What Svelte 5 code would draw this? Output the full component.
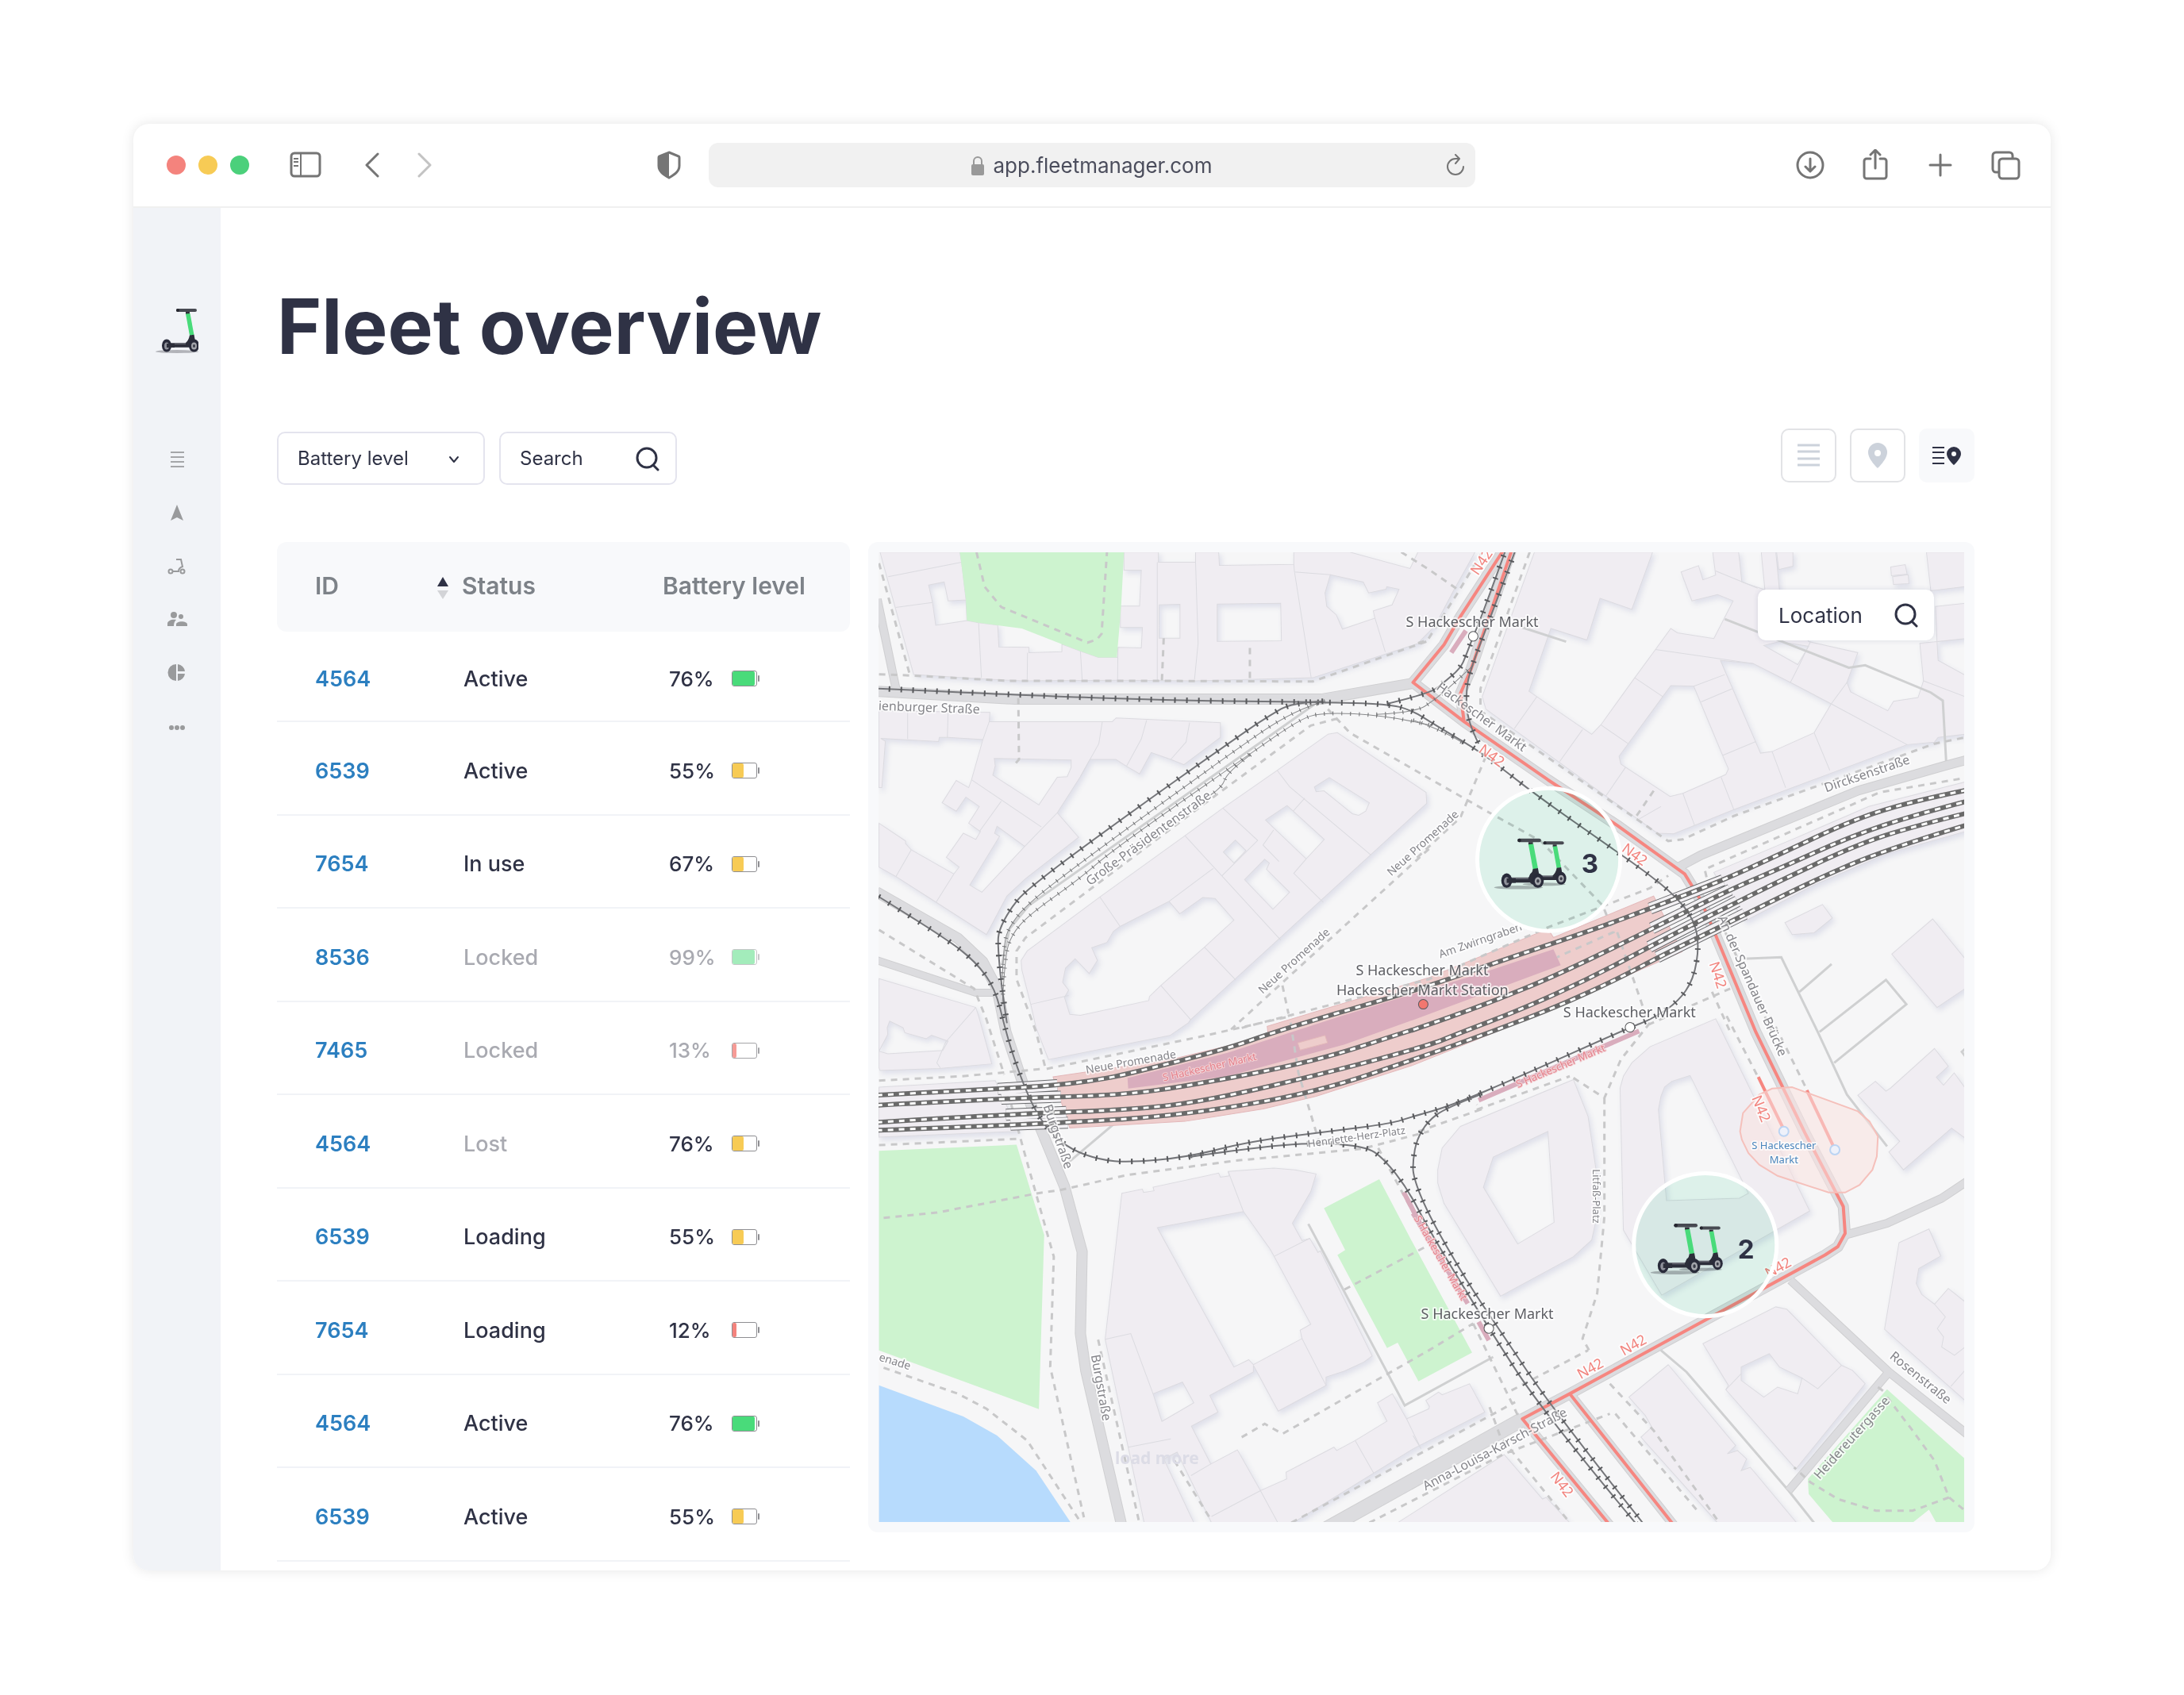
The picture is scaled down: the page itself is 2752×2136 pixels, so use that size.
<script>
  const vehicles = [
    { id: 4564, status: 'Active', battery: 76 },
    { id: 6539, status: 'Active', battery: 55 },
    { id: 7654, status: 'In use', battery: 67 },
    { id: 8536, status: 'Locked', battery: 99, locked: true },
    { id: 7465, status: 'Locked', battery: 13, locked: true },
    { id: 4564, status: 'Lost', battery: 76, level: 'mid', lost: true },
    { id: 6539, status: 'Loading', battery: 55 },
    { id: 7654, status: 'Loading', battery: 12 },
    { id: 4564, status: 'Active', battery: 76 },
    { id: 6539, status: 'Active', battery: 55 }
  ];

  const fills = { high: 92, mid: 48, low: 18 };
  const levelOf = (v) => v.level ?? (v.battery > 70 ? 'high' : v.battery > 20 ? 'mid' : 'low');

  // The map data comes in four survey tiles, each with its own origin and scale.
  const tiles = {
    nw: [-7, -16, 2.24, 2.529],
    ne: [673, -16, 2.178, 2.529],
    sw: [-7, 584, 2.24, 2.376],
    se: [673, 584, 2.178, 2.376]
  };

  function project(line) {
    let tile = tiles.nw;
    const points = [];
    for (const token of line.trim().split(/\s+/)) {
      if (tiles[token]) { tile = tiles[token]; continue; }
      const [x, y] = token.split(',').map(Number);
      points.push([Math.round((tile[0] + x / tile[2]) * 10) / 10, Math.round((tile[1] + y / tile[3]) * 10) / 10]);
    }
    return points;
  }

  const open = (line) => 'M' + project(line).map((p) => p.join(' ')).join('L');
  const openAll = (lines) => lines.map(open).join('');
  const area = (shape) => shape.split('|').map((ring) => open(ring) + 'Z').join('');
  const at = (point) => project(point)[0];

  // Rounded version of open(): corners are cut with quadratic curves.
  function smooth(line) {
    const p = project(line);
    let d = `M${p[0].join(' ')}`;
    for (let i = 1; i < p.length - 1; i++) {
      const mid = i === p.length - 2 ? p[i + 1] : [(p[i][0] + p[i + 1][0]) / 2, (p[i][1] + p[i + 1][1]) / 2];
      d += `Q${p[i].join(' ')} ${mid.join(' ')}`;
    }
    return p.length < 3 ? open(line) : d;
  }

  const buildings = [
    'nw 20,40 245,40 250,72 262,190 265,258 298,265 352,272 355,342 440,343 440,360 533,357 533,333 585,355 636,375 690,375 691,343 757,345 760,280 698,280 698,212 752,212 757,97 708,97 708,40 805,40 805,72 910,72 910,40 975,40 977,82 1187,79 1187,40 1345,40 1515,92 1537,40 ne 170,40 110,165 60,275 20,322 nw 1540,330 1240,440 910,450 690,448 420,450 300,443 115,430 | nw 157,145 201,135 212,195 262,192 265,258 177,273 168,200 | nw 807,208 866,206 866,314 807,314 | nw 971,205 1150,203 1152,322 971,324 | nw 1290,112 1383,135 1398,170 1447,158 1449,150 1484,158 1464,208 1411,227 1416,250 1324,285 1307,240 1280,213 1275,170',
    'nw 17,545 330,550 328,580 675,580 686,568 980,583 980,630 877,717 840,700 785,678 752,746 715,722 685,700 612,700 585,755 520,870 580,948 430,1080 378,1135 320,1258 178,1155 65,1073 17,1043 17,903 92,960 92,968 108,988 228,1065 243,1043 207,1012 255,935 290,955 303,930 270,903 300,850 262,820 235,865 195,838 235,767 270,790 278,765 310,637 212,630 187,630 185,643 22,633 35,642 25,790 17,790 | nw 342,697 559,702 559,725 548,755 520,757 468,845 338,750 345,720 | nw 350,913 428,977 307,1123 273,1100 357,945 343,935',
    'nw 1283,620 1310,615 1560,805 1562,840 895,1530 sw 890,20 838,58 495,130 460,35 nw 445,1480 420,1370 418,1340 435,1310 640,1138 880,943 987,855 1140,735 | nw 1287,758 1400,838 1390,865 1370,878 1352,873 1272,800 1250,803 1245,788 | nw 1168,847 1273,955 1222,1017 1107,893 | nw 1022,957 1052,990 1018,1030 988,995 | nw 1105,1018 1118,1030 1110,1050 1175,1123 1128,1177 1048,1083 | nw 835,1152 865,1192 930,1140 965,1143 1018,1212 935,1298 812,1420 780,1455 778,1468 585,1515 555,1512 540,1458 552,1435 535,1410 543,1365 570,1335 610,1382 633,1340 617,1300 660,1283 678,1248 697,1232',
    'nw 17,1398 290,1490 sw 298,0 335,143 187,157 20,163 17,155 | sw 17,105 42,55 40,35 47,15 85,35 90,50 150,68 165,57 212,75 197,103 42,113',
    'ne 333,40 657,40 600,222 513,187 477,320 378,283 318,483 490,620 515,590 608,440 665,350 707,283 725,297 825,315 878,195 835,175 765,195 735,103 783,83 795,128 830,113 822,40 893,40 902,135 965,160 955,40 995,40 1005,160 1085,325 1220,360 1190,455 1200,485 1302,545 1318,515 1385,503 1400,450 1390,330 1437,325 1440,385 1514,432 1514,620 1440,630 1430,645 1355,653 880,860 715,937 670,935 610,885 200,540 190,500 | ne 707,465 770,467 850,690 865,730 858,748 740,808 705,818 570,715 565,690 685,500 | ne 843,385 933,395 1035,455 1147,523 1100,615 985,675 953,680 | ne 962,337 1005,325 1085,340 1055,398',
    'ne 997,40 1042,40 1042,85 1003,95',
    'ne 1408,40 1514,40 1514,150 1420,163',
    'ne 1310,87 1350,80 1355,110 1312,115',
    'ne 1315,118 1358,112 1360,140 1318,143',
    'ne 1433,213 1514,203 1514,315 1437,325',
    'ne 825,1060 1050,950 1250,850 1514,772 1514,930 1300,1000 1100,1100 910,1215 860,1130',
    'sw 17,213 345,193 410,345 17,362',
    'sw 702,530 760,518 763,528 793,523 790,512 975,470 980,482 1005,478 1002,465 1130,455 1190,460 1250,472 1235,525 1183,620 1210,672 1232,665 1255,707 1262,703 1408,1017 1385,1035 1330,1062 1278,1080 1278,1105 1143,1182 1073,1045 1073,1065 950,1135 973,1185 898,1227 953,1340 1028,1298 1093,1420 1167,1385 1165,1365 1300,1290 1308,1300 1360,1270 1450,1212 1423,1157 1465,1130 1505,1205 1568,1175 se 45,1168 35,1150 70,1125 80,1133 155,1100 197,1185 0,1295 sw 1185,1516 955,1516 858,1305 820,1325 905,1516 765,1516 720,1290 655,967 | sw 802,633 1045,585 1120,697 1132,720 1235,922 1205,940 1210,965 1073,1043 1060,1028 1018,1050 | sw 790,1130 873,1095 905,1157 815,1213',
    'sw 1480,1516 se 250,1312 355,1445 365,1440 430,1516',
    'se 440,190 480,300 502,460 500,620 490,670 440,720 240,838 85,560 68,500 68,460 80,395 130,330 | se 370,345 387,617 287,682 193,512 220,422',
    'se 830,8 1088,583 682,835 577,640 568,215 577,180 600,140 650,92 | se 760,178 920,530 895,545 695,552 673,280 680,240 690,212 710,195',
    'se 1430,97 1468,150 1435,183 1455,207 1484,170 1514,215 1514,365 1477,335 1345,460 1305,407 1335,375 1220,237 1268,195 1297,225 1310,215',
    'se 1333,678 1415,637 1447,718 1387,755 1380,800 1395,833 1430,862 1468,815 1514,855 1514,1150 1293,937',
    'se 795,980 995,870 1025,877 1175,1045 1205,1060 1240,1100 1050,1355 858,1118 865,1105 | se 977,1010 1005,1050 1067,1083 1055,1130 1000,1110 962,1140 900,1090 900,1050',
    'se 700,1043 885,1285 862,1310 890,1300 915,1325 900,1360 925,1350 1052,1516 835,1516 625,1260 655,1230 637,1195 592,1140',
    'ne 1020,1220 1123,1162 1150,1205 1100,1252 1040,1258',
    'ne 1313,1320 1425,1208 1514,1335 1514,1430 1437,1490'
  ];

  const walls = [
    'nw 43,118 250,72', 'nw 64,216 168,200', 'nw 298,265 306,440', 'nw 436,360 435,445', 'nw 585,355 590,445',
    'nw 691,343 690,448', 'nw 802,72 802,450', 'nw 910,72 917,330 907,445', 'nw 1187,79 1189,103 1290,112',
    'nw 1189,103 1236,440', 'nw 1416,250 1445,358', 'nw 98,548 98,635', 'nw 212,548 210,630', 'nw 328,580 310,637',
    'nw 647,580 637,650 585,755', 'nw 772,575 757,635 715,722', 'nw 893,583 883,645 840,700', 'nw 278,765 475,915',
    'nw 362,833 300,930', 'nw 520,870 428,977', 'nw 108,988 65,1073', 'nw 228,1065 178,1155', 'nw 640,1138 697,1232',
    'nw 835,1152 960,1047', 'nw 880,943 1150,1275', 'nw 987,855 1085,958 985,1070', 'nw 1130,925 1100,973 1145,1025',
    'nw 1140,735 1175,787 1405,1005', 'nw 1218,823 1185,865', 'nw 1222,1017 1187,1063 1270,1155', 'nw 935,1298 1023,1402',
    'nw 812,1420 897,1530', 'nw 445,1480 552,1452', 'nw 290,1490 sw 205,78 180,140 190,155',
    'ne 340,500 278,602', 'ne 465,605 402,707', 'ne 515,590 590,650', 'ne 583,725 528,818', 'ne 608,440 685,500',
    'ne 665,350 933,395', 'ne 740,808 772,910', 'ne 845,757 880,860', 'ne 850,687 940,643', 'ne 985,675 1022,790',
    'ne 1100,615 1143,735', 'ne 1035,455 1060,398 1090,325', 'ne 770,467 855,430', 'ne 790,517 875,475',
    'ne 1147,523 1355,653', 'ne 1147,523 1190,455', 'ne 830,100 945,155', 'ne 1400,450 1514,500', 'ne 680,850 620,890',
    'sw 1002,465 1045,585', 'sw 1133,718 1232,665', 'sw 655,967 727,950 790,1130', 'sw 1210,965 1278,1105',
    'sw 720,1290 840,1265', 'sw 897,1375 953,1340', 'sw 955,1497 1093,1420 1142,1516', 'sw 1360,1270 1412,1367',
    'sw 1505,1205 1545,1292', 'se 0,1255 22,1295', 'se 1430,862 1460,900 1438,935 1455,960 1450,990 1485,1015 1514,990',
    'se 1514,1060 1475,1108', 'se 1067,1083 1110,1115 1175,1045', 'se 858,1118 900,1070'
  ];

  const parks = [
    'nw 245,40 708,40 700,212 688,375 636,375 585,355 533,333 420,283 298,265 265,258 262,190',
    'sw 17,403 405,385 483,655 468,1176 17,1000',
    'sw 1272,575 1428,488 se 0,680 162,1007 15,1093 sw 1480,977 1450,993 1310,715 1332,700',
    'se 1300,1117 1514,1325 1514,1516 1435,1516 1415,1477 1370,1516 1152,1516 1085,1430 1083,1385'
  ];

  const roads = [
    { w: 12, d: 'nw 10,483 400,508 1265,508 1535,455' },
    { w: 9, d: 'nw 12,190 65,475' },
    { w: 12, d: 'nw 10,1122 240,1270 310,1345 350,1430 375,1568 sw 430,225 540,510 590,705 585,950 600,1060 705,1540' },
    { w: 8, d: 'nw 12,1340 290,1443 350,1443' },
    { w: 10, d: 'ne 725,1045 790,1005 1220,800 1460,720 1530,698' },
    { w: 12, d: 'ne 250,30 130,245 85,335 0,455 140,580 370,765 560,910 745,1065 790,1150 830,1260 940,1568 se 1075,350 1180,570 1185,650 1165,690 1130,715 430,1130 300,1205' },
    { w: 12, d: 'ne 270,30 160,410 130,490 140,580' },
    { w: 17, d: 'sw 1260,1545 se 300,1207' },
    { w: 10, d: 'se 300,1205 545,1530' },
    { w: 10, d: 'se 430,1130 720,1530' },
    { w: 9, d: 'se 1185,655 1300,620 1450,545 1530,487' },
    { w: 9, d: 'se 1035,790 1305,1065 1530,1260' },
    { w: 9, d: 'se 1305,1065 1030,1420' }
  ];

  const lanes = [
    'nw 1245,525 440,1165 385,1240 365,1350', 'sw 530,455 560,430 800,215', 'ne 855,253 1195,408 1240,400 1420,487 1453,513 1462,705',
    'ne 300,280 420,325', 'sw 1228,622 1500,1165 se 220,1020', 'se 680,1000 750,1065 1030,1420 1110,1530',
    'ne 905,1335 1010,1330 1110,1568 se 1190,235 1300,390', 'ne 1060,1440 1148,1352',
    'se 1155,140 ne 1353,1480 1297,1402 1115,1568', 'se 1514,120 1505,107 1514,98'
  ];

  const footpaths = [
    'nw 292,40 315,150 362,215 470,265 605,328 632,318 645,300 660,40', 'nw 17,75 105,435', 'nw 17,429 110,433 380,450 800,450 1240,452 1568,322',
    'nw 820,314 815,450', 'nw 1063,345 1063,455', 'nw 410,505 412,700 400,715', 'nw 1490,40 1568,95 ne 130,165', 'ne 190,40 125,165 40,320 0,335',
    'nw 17,1243 285,1430 sw 320,10 370,175', 'nw 1310,570 1235,592 960,820 430,1268 405,1310 405,1400 460,1568 sw 487,158',
    'nw 1283,540 1345,615 1568,760 ne 210,870 350,960 520,1165 550,1250 395,1330', 'nw 1568,985 1010,1560', 'ne 200,690 130,885 0,1025',
    'nw 1155,1420 1172,1510', 'nw 1040,1555 1568,1400 ne 370,1235 650,1110 700,1070', 'sw 490,158 930,60 1180,0',
    'ne 320,40 185,475 185,545 700,960 740,955 880,880 1430,650 1514,630', 'ne 805,1075 800,1050 1280,805 1500,762', 'ne 660,800 610,885',
    'sw 30,604 180,588 465,530 530,520 720,475 1020,433 1380,397 1568,345', 'sw 390,265 425,400 510,720 500,1050 595,1500',
    'sw 17,193 250,180 480,158', 'sw 17,386 415,367', 'sw 30,1052 240,1130 320,1175 435,1270 580,1505', 'sw 635,968 750,1510',
    'sw 850,1330 955,1510', 'sw 1040,1260 1105,1220 1155,1250 1568,1000 se 165,920', 'sw 1330,818 1568,685', 'sw 1178,20 1200,170 1265,400',
    'sw 1180,1516 1568,1295 se 280,1155', 'sw 1400,1516 se 250,1310 540,1190', 'sw 1425,395 1540,620', 'se 440,185 525,245 570,130 650,20',
    'se 525,245 525,600 505,830 465,965 488,1010', 'se 15,345 185,280 175,265', 'se 175,280 430,180', 'se 860,0 945,180', 'se 980,0 1080,220',
    'ne 840,1210 985,1568', 'ne 560,1250 640,1520', 'ne 645,1545 870,1430', 'ne 820,1440 870,1568', 'se 540,1100 660,1240 840,1516',
    'se 165,920 290,1200', 'se 210,1170 240,1260 430,1516', 'se 270,1120 480,1000', 'se 555,1190 780,1480', 'se 1275,1110 1300,1130',
    'se 1300,1140 1370,1240 1430,1330 1470,1440 1514,1480', 'se 1470,1440 1370,1480 1270,1480 1165,1445 1090,1395 1045,1350'
  ];

  const station = 'sw 508,182 840,130 1115,60 nw 1112,1550 1568,1395 ne 370,1240 385,1267 660,1135 738,1312 se 290,20 0,147 sw 1250,240 1100,278 880,315 555,335';
  const platform = 'sw 718,185 1000,110 1320,0 ne 190,1380 385,1305 405,1355 0,1530 sw 1330,85 1000,180 720,217';

  const stops = ['se 180,252 620,45', 'sw 1497,527 1545,625', 'se 0,590 150,860', 'se 180,915 208,970', 'ne 145,290 105,360'];

  const rails = [
    'sw 10,237 350,218 520,207 640,190 720,173 1000,98 nw 1140,1565 1470,1455 ne 60,1415 220,1350 500,1240 650,1175 850,1085 1000,1005 1220,885 1400,825 1530,795',
    'sw 10,267 400,245 700,237 900,207 1250,135 1500,48 ne 0,1562 200,1480 400,1385 660,1237 860,1120 1000,1050 1200,945 1380,875 1530,830',
    'sw 10,318 400,293 740,280 950,252 1300,165 1568,88 ne 120,1575 300,1495 480,1400 660,1290 800,1205 880,1160 1000,1090 1230,965 1400,905 1530,868',
    'sw 10,342 560,320 900,293 1250,228 1540,125 ne 215,1568 400,1485 560,1400 690,1320 910,1195 1100,1085 1300,985 1530,905'
  ];

  const bridges = [
    'sw 352,218 520,207', 'sw 362,247 530,241', 'sw 375,295 545,287', 'sw 388,325 550,319',
    'ne 650,1175 850,1085', 'ne 655,1238 870,1115', 'ne 648,1297 890,1152', 'ne 670,1330 910,1192'
  ];

  const redRoutes = [
    'ne 250,30 130,245 85,335 0,455 140,580 370,765 560,910 745,1065 790,1150 830,1260 940,1568 se 1075,350 1180,570 1185,650 1165,690 1130,715 430,1130 300,1205 545,1530',
    'ne 272,30 160,410 130,490 140,580', 'se 430,1130 720,1530', 'se 947,182 1015,335', 'se 1080,222 1153,390'
  ];

  const trams = [
    'nw 10,474 404,495 840,512 1265,518 1450,523 1520,543 ne 60,590 170,665 240,725 345,820 560,995 640,1060 720,1135 770,1210 785,1290 770,1400 725,1475 650,1530 595,1553 se 300,178 100,270 0,300 sw 1460,322 1300,343 1060,375 890,422 723,438 640,430 560,400 500,350 450,270 405,150 nw 375,1568 345,1430 290,1345 200,1265 10,1133',
    'nw 1270,515 1180,520 1120,560 1060,603 670,915 430,1117 385,1180 355,1245 352,1290 362,1420 378,1540',
    'nw 1450,523 1568,490 ne 80,460 130,410 145,370 165,308 190,240 255,30', 'ne 282,30 215,240 155,420 145,490 150,580 180,650',
    'sw 890,422 1060,395 1250,378 1390,390 1440,425 1510,520 1568,640 se 208,935 360,1190 620,1530',
    'se 185,235 90,275 40,315 10,370 0,430 0,480 40,590 145,790 235,935 385,1180 640,1530'
  ];

  const sidings = [
    'nw 1275,515 1190,540 1000,688 620,1000 440,1155 385,1230 368,1290 365,1400',
    'nw 1568,590 1450,560 1265,550 1200,575 1060,685 680,985 580,1083 440,1195 390,1260 372,1330 365,1480',
    'nw 1065,685 1000,740 985,790 950,815', 'nw 1420,557 1530,550 ne 60,510 110,460 165,400', 'ne 0,575 80,605 140,650'
  ];

  const labels = [
    { text: 'ienburger Straße', at: 'nw 15,543', turn: 2 },
    { text: 'Große-Präsidentenstraße', at: 'nw 612,1103', turn: -36 },
    { text: 'Neue Promenade', at: 'nw 1099,1448', turn: -42, kind: 'small' },
    { text: 'Neue Promenade', at: 'nw 1462,1073', turn: -42, kind: 'small' },
    { text: 'Neue Promenade', at: 'sw 602,172', turn: -10, kind: 'small' },
    { text: 'S Hackescher Markt', at: 'sw 820,195', turn: -13, kind: 'pink' },
    { text: 'S Hackescher Markt', at: 'se 288,215', turn: -23, kind: 'pink' },
    { text: 'S Hackescher Markt', at: 'se 2,605', turn: 60, kind: 'pink' },
    { text: 'Hackescher Markt', at: 'ne 62,475', turn: 36 },
    { text: 'Dircksenstraße', at: 'ne 1133,805', turn: -19 },
    { text: 'Am Zwirngraben', at: 'ne 75,1333', turn: -19, kind: 'small' },
    { text: 'An der Spandauer Brücke', at: 'ne 835,1205', turn: 66 },
    { text: 'Burgstraße', at: 'sw 480,270', turn: 71 },
    { text: 'Burgstraße', at: 'sw 615,1015', turn: 80 },
    { text: 'Henriette-Herz-Platz', at: 'sw 1228,393', turn: -8, kind: 'tiny' },
    { text: 'enade', at: 'sw 15,1030', turn: 17, kind: 'small' },
    { text: 'Litfaß-Platz', at: 'se 492,458', turn: 90, kind: 'tiny' },
    { text: 'Anna-Louisa-Karsch-Straße', at: 'se 35,1420', turn: -28 },
    { text: 'Rosenstraße', at: 'se 1305,1022', turn: 39 },
    { text: 'Heidereutergasse', at: 'se 1115,1388', turn: -48 },
    { text: 'N42', at: 'ne 178,116', turn: -56, kind: 'route' },
    { text: 'N42', at: 'ne 178,675', turn: 36, kind: 'route' },
    { text: 'N42', at: 'ne 570,990', turn: 36, kind: 'route' },
    { text: 'N42', at: 'ne 812,1350', turn: 72, kind: 'route' },
    { text: 'N42', at: 'se 928,245', turn: 68, kind: 'route' },
    { text: 'N42', at: 'se 975,785', turn: -29, kind: 'route' },
    { text: 'N42', at: 'se 578,1017', turn: -29, kind: 'route' },
    { text: 'N42', at: 'se 460,1087', turn: -29, kind: 'route' },
    { text: 'N42', at: 'se 375,1378', turn: 52, kind: 'route' },
    { text: 'S Hackescher Markt', at: 'nw 1503,278', turn: 0, kind: 'stop' },
    { text: 'S Hackescher Markt', at: 'nw 1362,1388', turn: 0, kind: 'stop' },
    { text: 'Hackescher Markt Station', at: 'nw 1307,1450', turn: 0, kind: 'stop' },
    { text: 'S Hackescher Markt', at: 'ne 412,1522', turn: 0, kind: 'stop' },
    { text: 'S Hackescher Markt', at: 'se 22,907', turn: 0, kind: 'stop' },
    { text: 'S Hackescher', at: 'se 929,398', turn: 0, kind: 'blue' },
    { text: 'Markt', at: 'se 978,440', turn: 0, kind: 'blue' }
  ];

  const tramStops = ['ne 165,308', 'ne 595,1553', 'se 208,935'];
  const busStops = ['se 1017,345', 'se 1157,400'];
  const busArea = 'se 1040,213 1220,285 1252,315 1275,360 1272,420 1260,460 1225,505 1185,528 1140,528 1000,478 950,445 920,410 902,370 897,345 905,290 950,235 985,217';
  const water = 'sw 17,1105 255,1198 350,1255 460,1360 558,1516 17,1516';

  const clusters = [
    { x: 844, y: 387, count: 3 },
    { x: 1041, y: 872, count: 2 }
  ];
</script>

<svelte:head>
  <title>Fleet overview</title>
</svelte:head>

{#snippet scooter()}
  <ellipse cx="27" cy="57" rx="27" ry="2" fill="#20222c" opacity=".3" />
  <path d="M28 3h22a2 2 0 0 1 0 4H28a2 2 0 0 1 0-4z" fill="#484a52" />
  <circle cx="28" cy="5" r="2" fill="#25262f" />
  <path d="M38 7h5v3h-5z" fill="#2e3038" />
  <path d="M38 9.500l5.500-.5 5 27-5.500 1z" fill="#49db7a" />
  <path d="M43 36.500l5.500-.8 1.500 8-4 8H14v-5h23c3-2 5-5 6-10.200z" fill="#2c2e3a" />
  <path d="M16 47h22" stroke="#62646e" stroke-width="2" />
  <ellipse cx="14" cy="49.500" rx="6" ry="8" fill="#292b3a" />
  <ellipse cx="14" cy="50" rx="3" ry="4.500" fill="#8f919a" />
  <path d="M14 47h10v5H14z" fill="#2c2e3a" />
  <ellipse cx="48.500" cy="49.500" rx="6.500" ry="8" fill="#292b3a" />
  <ellipse cx="48.500" cy="50" rx="3.500" ry="4.500" fill="#a3a5ab" />
  <ellipse cx="48.500" cy="50" rx="1.500" ry="2" fill="#3a3c48" />
{/snippet}

{#snippet magnifier()}
  <svg width="32" height="32" viewBox="0 0 32 32" fill="none" stroke="#2f3245" stroke-width="3" stroke-linecap="round" aria-hidden="true">
    <circle cx="15" cy="15" r="12" /><path d="M23 24l6 6" />
  </svg>
{/snippet}

<div class="window">
  <header class="toolbar">
    <div class="left">
      <span class="lights" aria-hidden="true"><i class="close"></i><i class="min"></i><i class="max"></i></span>
      <button class="bare panel" aria-label="Toggle sidebar">
        <svg width="40" height="34" viewBox="0 0 40 34" fill="none" stroke="#757575" stroke-width="3">
          <rect x="2" y="2" width="36" height="29" rx="4" /><path d="M14 2v29" stroke-width="2" /><path d="M5 9h6M5 13h6M5 18h6" stroke-width="2" />
        </svg>
      </button>
      <button class="bare" aria-label="Back">
        <svg width="20" height="32" viewBox="0 0 20 32" fill="none" stroke="#757575" stroke-width="3" stroke-linecap="round" stroke-linejoin="round"><path d="M17 2L3 16l14 14" /></svg>
      </button>
      <button class="bare forward" aria-label="Forward">
        <svg width="20" height="32" viewBox="0 0 20 32" fill="none" stroke="#c3c3c3" stroke-width="3" stroke-linecap="round" stroke-linejoin="round"><path d="M3 2l14 14L3 30" /></svg>
      </button>
      <button class="bare shield" aria-label="Privacy report">
        <svg width="30" height="36" viewBox="0 0 30 36"><path d="M15 2l12 5c1 0 1 1 1 2v10c0 7-6 11-13 15C8 30 2 26 2 19V9c0-1 0-2 1-2z" fill="none" stroke="#757575" stroke-width="3" /><path d="M15 2v32C8 30 2 26 2 19V9c0-1 0-2 1-2z" fill="#757575" /></svg>
      </button>
    </div>
    <div class="address">
      <label>
        <svg width="18" height="26" viewBox="0 0 18 26" aria-hidden="true"><rect x="1" y="11" width="16" height="14" rx="2" fill="#999" /><path d="M4 12V7a5 5 0 0 1 10 0v5" fill="none" stroke="#999" stroke-width="2" /></svg>
        <input type="text" aria-label="Address" value="app.fleetmanager.com" />
      </label>
      <button class="bare" aria-label="Reload">
        <svg width="24" height="28" viewBox="0 0 24 28" fill="none" stroke="#757575" stroke-width="2" stroke-linecap="round" stroke-linejoin="round"><path d="M21 16A10 10 0 1 1 11 6h5M11 1l5 5-5 6" /></svg>
      </button>
    </div>
    <div class="right">
      <button class="bare" aria-label="Downloads">
        <svg width="40" height="40" viewBox="0 0 40 40" fill="none" stroke="#757575" stroke-width="3" stroke-linecap="round" stroke-linejoin="round"><circle cx="20" cy="20" r="16" /><path d="M20 12v15M14 22l6 6 6-6" /></svg>
      </button>
      <button class="bare" aria-label="Share">
        <svg width="40" height="40" viewBox="0 0 40 40" fill="none" stroke="#757575" stroke-width="3" stroke-linecap="round" stroke-linejoin="round"><path d="M14 12H9a3 3 0 0 0-3 3v19a3 3 0 0 0 3 3h22a3 3 0 0 0 3-3V15a3 3 0 0 0-3-3h-5M20 24V2M14 7l6-6 6 6" /></svg>
      </button>
      <button class="bare" aria-label="New tab">
        <svg width="40" height="40" viewBox="0 0 40 40" fill="none" stroke="#757575" stroke-width="3" stroke-linecap="round"><path d="M20 7v26M7 20h26" /></svg>
      </button>
      <button class="bare" aria-label="Show tabs">
        <svg width="40" height="40" viewBox="0 0 40 40" fill="none" stroke="#757575" stroke-width="3" stroke-linejoin="round"><rect x="12" y="12" width="25" height="25" rx="4" /><path d="M12 29H8a4 4 0 0 1-4-4V8a4 4 0 0 1 4-4h17a4 4 0 0 1 4 4v4" /></svg>
      </button>
    </div>
  </header>

  <div class="app">
    <aside>
      <svg class="logo" width="54" height="62" viewBox="0 0 54 62" role="img" aria-label="Fleet manager">{@render scooter()}</svg>
      <nav>
        <a href="#list" aria-label="List"><svg viewBox="0 0 26 26"><path d="M5 4h17M5 10h17M5 16h17M5 22h17" fill="none" stroke="#a5a6a9" stroke-width="2" /></svg></a>
        <a href="#map" aria-label="Map"><svg viewBox="0 0 26 26"><path d="M13 3l8 20-8-4-8 4z" /></svg></a>
        <a href="#scooters" aria-label="Scooters"><svg viewBox="0 0 26 26"><path d="M12 5h6l2 9c-3 1-5 3-5 6H7" fill="none" stroke="#999a9c" stroke-width="2" /><circle cx="5" cy="20" r="2.500" fill="none" stroke="#999a9c" stroke-width="2" /><circle cx="20" cy="20" r="2.500" fill="none" stroke="#999a9c" stroke-width="2" /></svg></a>
        <a href="#users" aria-label="Users"><svg viewBox="0 0 26 26"><circle cx="9" cy="8" r="4" /><circle cx="18" cy="10" r="3" /><path d="M1 22v-3c0-4 6-6 11-5-2 2-3 4-3 8zM12 22v-2c0-5 14-5 14 0v2z" /></svg></a>
        <a href="#stats" aria-label="Statistics"><svg viewBox="0 0 26 26"><path d="M12 3v21A10 10 0 0 1 12 3zM14 3a10 10 0 0 1 9 9h-9zM14 15h9a10 10 0 0 1-9 9z" /></svg></a>
        <a href="#more" aria-label="More"><svg viewBox="0 0 26 26"><circle cx="6" cy="16" r="3" /><circle cx="13" cy="16" r="3" /><circle cx="20" cy="16" r="3" /></svg></a>
      </nav>
    </aside>

    <main>
      <h1>Fleet overview</h1>

      <div class="controls">
        <div class="filters">
          <div class="select">
            <select aria-label="Sort vehicles by"><option>Battery level</option></select>
            <svg width="16" height="16" viewBox="0 0 16 16" fill="none" stroke="#2f3245" stroke-width="2" stroke-linecap="round" stroke-linejoin="round" aria-hidden="true"><path d="M3 5l5 6 5-6" /></svg>
          </div>
          <label class="search"><input type="text" placeholder="Search" aria-label="Search" />{@render magnifier()}</label>
        </div>
        <div class="views">
          <button aria-label="List view"><svg width="40" height="40" viewBox="0 0 40 40"><path d="M6 7h28M6 15h28M6 24h28M6 32h28" fill="none" stroke="#ccd2db" stroke-width="3" /></svg></button>
          <button aria-label="Map view"><svg width="40" height="40" viewBox="0 0 40 40"><path d="M20 4a12 12 0 0 0-12 12c0 9 12 20 12 20s12-11 12-20A12 12 0 0 0 20 4zm0 9a4 4 0 1 1 0 8 4 4 0 0 1 0-8z" fill="#ccd2db" /></svg></button>
          <button class="current" aria-label="List and map view"><svg width="40" height="40" viewBox="0 0 40 40"><path d="M2 10h15M2 16h15M2 23h15M2 30h15" fill="none" stroke="#2f3245" stroke-width="2" /><path d="M29 9a9 9 0 0 0-9 9c0 6 9 14 9 14s9-8 9-14a9 9 0 0 0-9-9zm0 6a3 3 0 1 1 0 6 3 3 0 0 1 0-6z" fill="#2f3245" /></svg></button>
        </div>
      </div>

      <div class="overview">
        <table>
          <thead>
            <tr>
              <th class="id">ID</th>
              <th class="status">
                <svg width="16" height="30" viewBox="0 0 16 30" aria-hidden="true"><path d="M8 1l7 12H1z" fill="#2f3245" /><path d="M8 29l7-11H1z" fill="#d3d4d7" /></svg>Status
              </th>
              <th class="level">Battery level</th>
            </tr>
          </thead>
          <tbody>
            {#each vehicles as vehicle}
              <tr class:locked={vehicle.locked} class:lost={vehicle.lost}>
                <td class="id"><a href="#{vehicle.id}">{vehicle.id}</a></td>
                <td class="status">{vehicle.status}</td>
                <td class="level">
                  <div class="charge">
                    <span>{vehicle.battery}%</span>
                    <i class="battery {levelOf(vehicle)}" aria-hidden="true"><b style:width="{fills[levelOf(vehicle)]}%"></b></i>
                  </div>
                </td>
              </tr>
            {/each}
          </tbody>
        </table>

        <section class="map" aria-label="Map">
          <svg viewBox="0 0 1367 1221">
            <rect class="ground" width="1367" height="1221" />
            <path class="water" d={area(water)} />
            <g class="buildings">
              {#each buildings as shape}<path d={area(shape)} />{/each}
            </g>
            <path class="walls" d={openAll(walls)} />
            {#each parks as shape}<path class="park" d={area(shape)} />{/each}
            <path class="lanes" d={openAll(lanes)} />
            {#each roads as road}<path class="casing" stroke-width={road.w + 2} d={open(road.d)} />{/each}
            {#each roads as road}<path class="road" stroke-width={road.w} d={open(road.d)} />{/each}
            <path class="station" d={area(station)} />
            <path class="platform" d={area(platform)} />
            <path class="station" d={area('sw 1198,80 1275,58 1282,80 1205,102')} />
            <path class="footpaths" d={openAll(footpaths)} />
            <path class="stops" d={openAll(stops)} />
            <path class="routes" d={openAll(redRoutes)} />
            <path class="bridge-edge" d={openAll(bridges)} />
            <path class="bridge" d={openAll(bridges)} />
            {#each sidings as line}
              <path class="siding" d={smooth(line)} /><path class="siding ties" d={smooth(line)} />
            {/each}
            {#each trams as line}
              <path class="tram" d={smooth(line)} /><path class="tram ties" d={smooth(line)} />
            {/each}
            {#each rails as line}
              <path class="rail" d={smooth(line)} /><path class="rail-gap" d={smooth(line)} />
            {/each}
            <path class="bus-area" d={area(busArea)} />
            {#each busStops as stop}<circle class="bus-stop" cx={at(stop)[0]} cy={at(stop)[1]} r="6" />{/each}
            {#each tramStops as stop}<circle class="tram-stop" cx={at(stop)[0]} cy={at(stop)[1]} r="6" />{/each}
            <circle class="hub" cx={at('nw 1552,1480')[0]} cy={at('nw 1552,1480')[1]} r="6" />
            {#each labels as label}
              <text class="label {label.kind ?? 'street'}" transform="translate({at(label.at).join(' ')}) rotate({label.turn})">{label.text}</text>
            {/each}
            <text class="more" x={at('sw 683,1340')[0]} y={at('sw 683,1340')[1]}>load more</text>
            {#each clusters as cluster}
              <circle class="cluster" cx={cluster.x} cy={cluster.y} r="90" />
              <g transform="translate({cluster.x} {cluster.y})">
                <circle class="ring" r="90" />
                <g transform="translate(-33 -26)">{@render scooter()}</g>
                <g transform="translate(-69 -30) scale(1.14)">{@render scooter()}</g>
                <text class="count" x="41" y="17">{cluster.count}</text>
              </g>
            {/each}
          </svg>
          <label class="location"><input type="text" placeholder="Location" aria-label="Location" />{@render magnifier()}</label>
        </section>
      </div>
    </main>
  </div>
</div>

<style>
  :global(*) { box-sizing: border-box; }
  :global(body) { margin: 0; background: #fff; color: #2f3245; font-family: Inter, "Liberation Sans", sans-serif; }
  svg { display: block; flex: none; }
  button, input, select { font: inherit; color: inherit; padding: 0; margin: 0; outline: 0; }
  .bare { background: none; border: 0; display: block; }

  .window { background: #fff; border-radius: 20px; box-shadow: 0 0 16px rgba(0, 0, 0, .1); margin: 156px 168px; overflow: hidden; }
  .toolbar { align-items: center; border-bottom: 2px solid #f0f0f0; display: grid; grid-template-columns: 1fr 40% 1fr; height: 106px; }
  .left { align-items: center; display: flex; padding-left: 42px; }
  .lights { display: flex; gap: 16px; }
  .lights i { border-radius: 50%; height: 24px; width: 24px; }
  .close { background: #f4837d; }
  .min { background: #f7cb55; }
  .max { background: #4bd07b; }
  .panel { margin: 0 54px 0 51px; }
  .forward { margin-left: 46px; }
  .shield { margin-left: auto; margin-right: 35px; }
  .address { align-items: center; background: #f1f1f1; border-radius: 12px; display: flex; height: 56px; padding: 0 12px; }
  .address label { align-items: center; display: flex; gap: 11px; justify-content: center; flex: 1; padding: 2px 0 0 22px; }
  .address input { background: none; border: 0; color: #4b4d5c; field-sizing: content; font-size: 26px; line-height: 32px; }
  .right { display: flex; gap: 42px; justify-content: flex-end; padding-right: 37px; }

  .app { display: flex; }
  aside { align-items: center; background: #f1f3f7; display: flex; flex: none; flex-direction: column; padding-top: 124px; width: 110px; }
  nav { display: flex; flex-direction: column; gap: 41px; margin-top: 118px; }
  nav svg { fill: #999a9c; height: 26px; width: 26px; }
  main { flex: 1; min-width: 0; padding: 94px 96px 11px 71px; }
  h1 { font-size: 96px; font-weight: 700; line-height: 110px; margin: 0 0 74px; }

  .controls { display: flex; justify-content: space-between; margin-bottom: 72px; }
  .filters { display: flex; gap: 18px; font-size: 24px; padding-top: 4px; }
  .select { position: relative; }
  .select select { appearance: none; background: #fff; border: 2px solid #e4e4ee; border-radius: 10px; height: 67px; padding: 0 24px; width: 262px; }
  .select svg { position: absolute; right: 31px; top: 27px; pointer-events: none; }
  .search { align-items: center; border: 2px solid #e4e4ee; border-radius: 10px; display: flex; height: 67px; padding: 0 19px 0 24px; width: 224px; }
  .search input, .location input { background: none; border: 0; flex: 1; min-width: 0; width: 0; }
  .search input::placeholder, .location input::placeholder { color: #2f3245; opacity: 1; }
  .views { display: flex; gap: 17px; }
  .views button { align-items: center; background: #fff; border: 2px solid #e2e3e6; border-radius: 10px; display: flex; height: 68px; justify-content: center; width: 70px; }
  .views .current { background: #f8f9fb; border-color: #f8f9fb; }

  .overview { align-items: flex-start; display: flex; gap: 23px; }
  table { border-collapse: separate; border-spacing: 0; flex: none; table-layout: fixed; width: 722px; }
  th { background: #f8f9fb; color: #7d8288; font-size: 30px; font-weight: 600; height: 113px; padding: 0 0 3px; text-align: left; }
  th.id { border-radius: 12px 0 0 12px; }
  th.level { border-radius: 0 12px 12px 0; padding-left: 34px; }
  th.status svg { display: inline-block; margin: 0 16px 0 0; vertical-align: middle; }
  .id { width: 201px; }
  .status { width: 251px; }
  td { border-bottom: 2px solid #f1f3f7; font-size: 27px; font-weight: 500; height: 117px; padding: 6px 0 0; }
  th.id, td.id { padding-left: 48px; }
  td.status { padding-left: 34px; }
  td.level { padding-left: 42px; }
  tr:nth-child(even) td { height: 118px; }
  tr:first-child td { height: 114px; }
  td a { color: #2c7fc0; font-weight: 600; text-decoration: none; }
  .charge { align-items: center; display: flex; font-size: 26px; }
  .charge span { width: 79px; }
  .battery { background: #fff; border: 1px solid #8e8e92; border-radius: 3px; display: block; height: 20px; position: relative; width: 32px; }
  .battery::after { background: #8e8e92; border-radius: 1px; content: ""; height: 8px; position: absolute; right: -4px; top: 5px; width: 2px; }
  .battery b { border-radius: 2px; display: block; height: 100%; }
  .high b { background: #49db7a; }
  .mid b { background: #f7cb55; }
  .low b { background: #f4837d; }
  .locked .status, .lost .status, .locked .charge span { color: #a9aab1; }
  .locked .battery { opacity: .5; }
  .locked .low { opacity: .8; }

  .map { background: #f8f9fb; border-radius: 12px; flex: 1; min-width: 0; padding: 13px; position: relative; }
  .map > svg { height: auto; width: 100%; }
  .location { align-items: center; background: #fff; border-radius: 10px; box-shadow: 0 0 6px rgba(60, 70, 120, .15); display: flex; font-size: 26px; height: 64px; padding: 0 19px 0 26px; position: absolute; right: 51px; top: 60px; width: 222px; }

  .ground { fill: #f6f6f7; }
  .water { fill: #b7dbfd; }
  .park { fill: #cdf3cf; }
  .buildings { filter: drop-shadow(3px 4px 3px #dfe0ea); }
  .buildings path { fill: #f0edf2; fill-rule: evenodd; stroke: #dcdbe0; stroke-width: 1; }
  .walls { fill: none; stroke: #dbdbe0; stroke-width: 1; }
  .lanes { fill: none; stroke: #cfd0d1; stroke-width: 3; }
  .casing, .road { fill: none; stroke-linejoin: round; }
  .casing { stroke: #cfcfd1; }
  .road { stroke: #dcdcdf; }
  .station { fill: #eecdcc; stroke: #e3b8ba; stroke-width: 1; }
  .platform { fill: #d9adbd; }
  .footpaths { fill: none; stroke: #c8c8c9; stroke-dasharray: 8 7; stroke-width: 3; }
  .stops { fill: none; stroke: #d9adbd; stroke-width: 6; }
  .routes { fill: none; stroke: #f68680; stroke-linejoin: round; stroke-width: 4; }
  .bridge-edge, .bridge, .siding, .tram, .rail, .rail-gap { fill: none; }
  .bridge-edge { stroke: #6a6b6e; stroke-width: 15; }
  .bridge { stroke: #f3f1f4; stroke-width: 13; }
  .siding { stroke: #8a8b8d; stroke-width: 1; }
  .siding.ties { stroke: #6d6e70; stroke-dasharray: 1 10; stroke-width: 5; }
  .tram { stroke: #75767a; stroke-width: 2; }
  .tram.ties { stroke: #58595c; stroke-dasharray: 2 13; stroke-width: 7; }
  .rail { stroke: #6a6a6a; stroke-width: 6; }
  .rail-gap { stroke: #fff; stroke-dasharray: 7 7; stroke-width: 3; }
  .bus-area { fill: rgba(250, 226, 224, .55); stroke: #f5c0bb; stroke-width: 2; }
  .bus-stop { fill: #eef1fa; stroke: #bbd4f3; stroke-width: 2; }
  .tram-stop { fill: #fff; stroke: #58595c; stroke-width: 1; }
  .hub { fill: #f2776f; stroke: #58595c; stroke-width: 1; }
  .label { font-family: "Noto Sans", sans-serif; paint-order: stroke; stroke: rgba(255, 255, 255, .7); stroke-linejoin: round; stroke-width: 4px; }
  .street { fill: #85858a; font-size: 16px; }
  .small { fill: #85858a; font-size: 14px; }
  .tiny { fill: #85858a; font-size: 13px; }
  .pink { fill: #e37f8b; font-size: 13px; stroke: #f3d3d6; stroke-width: 2px; }
  .route { fill: #f2837d; font-size: 18px; }
  .stop { fill: #5d5e63; font-size: 18px; }
  .blue { fill: #4a86bd; font-size: 13px; }
  .more { fill: #dcdce6; font-family: "Noto Sans", sans-serif; font-size: 21px; font-weight: 700; }
  .cluster { fill: #e5faf2; mix-blend-mode: multiply; }
  .ring { fill: none; stroke: #fff; stroke-width: 5; }
  .count { fill: #2f3245; font-size: 33px; font-weight: 700; }
</style>
